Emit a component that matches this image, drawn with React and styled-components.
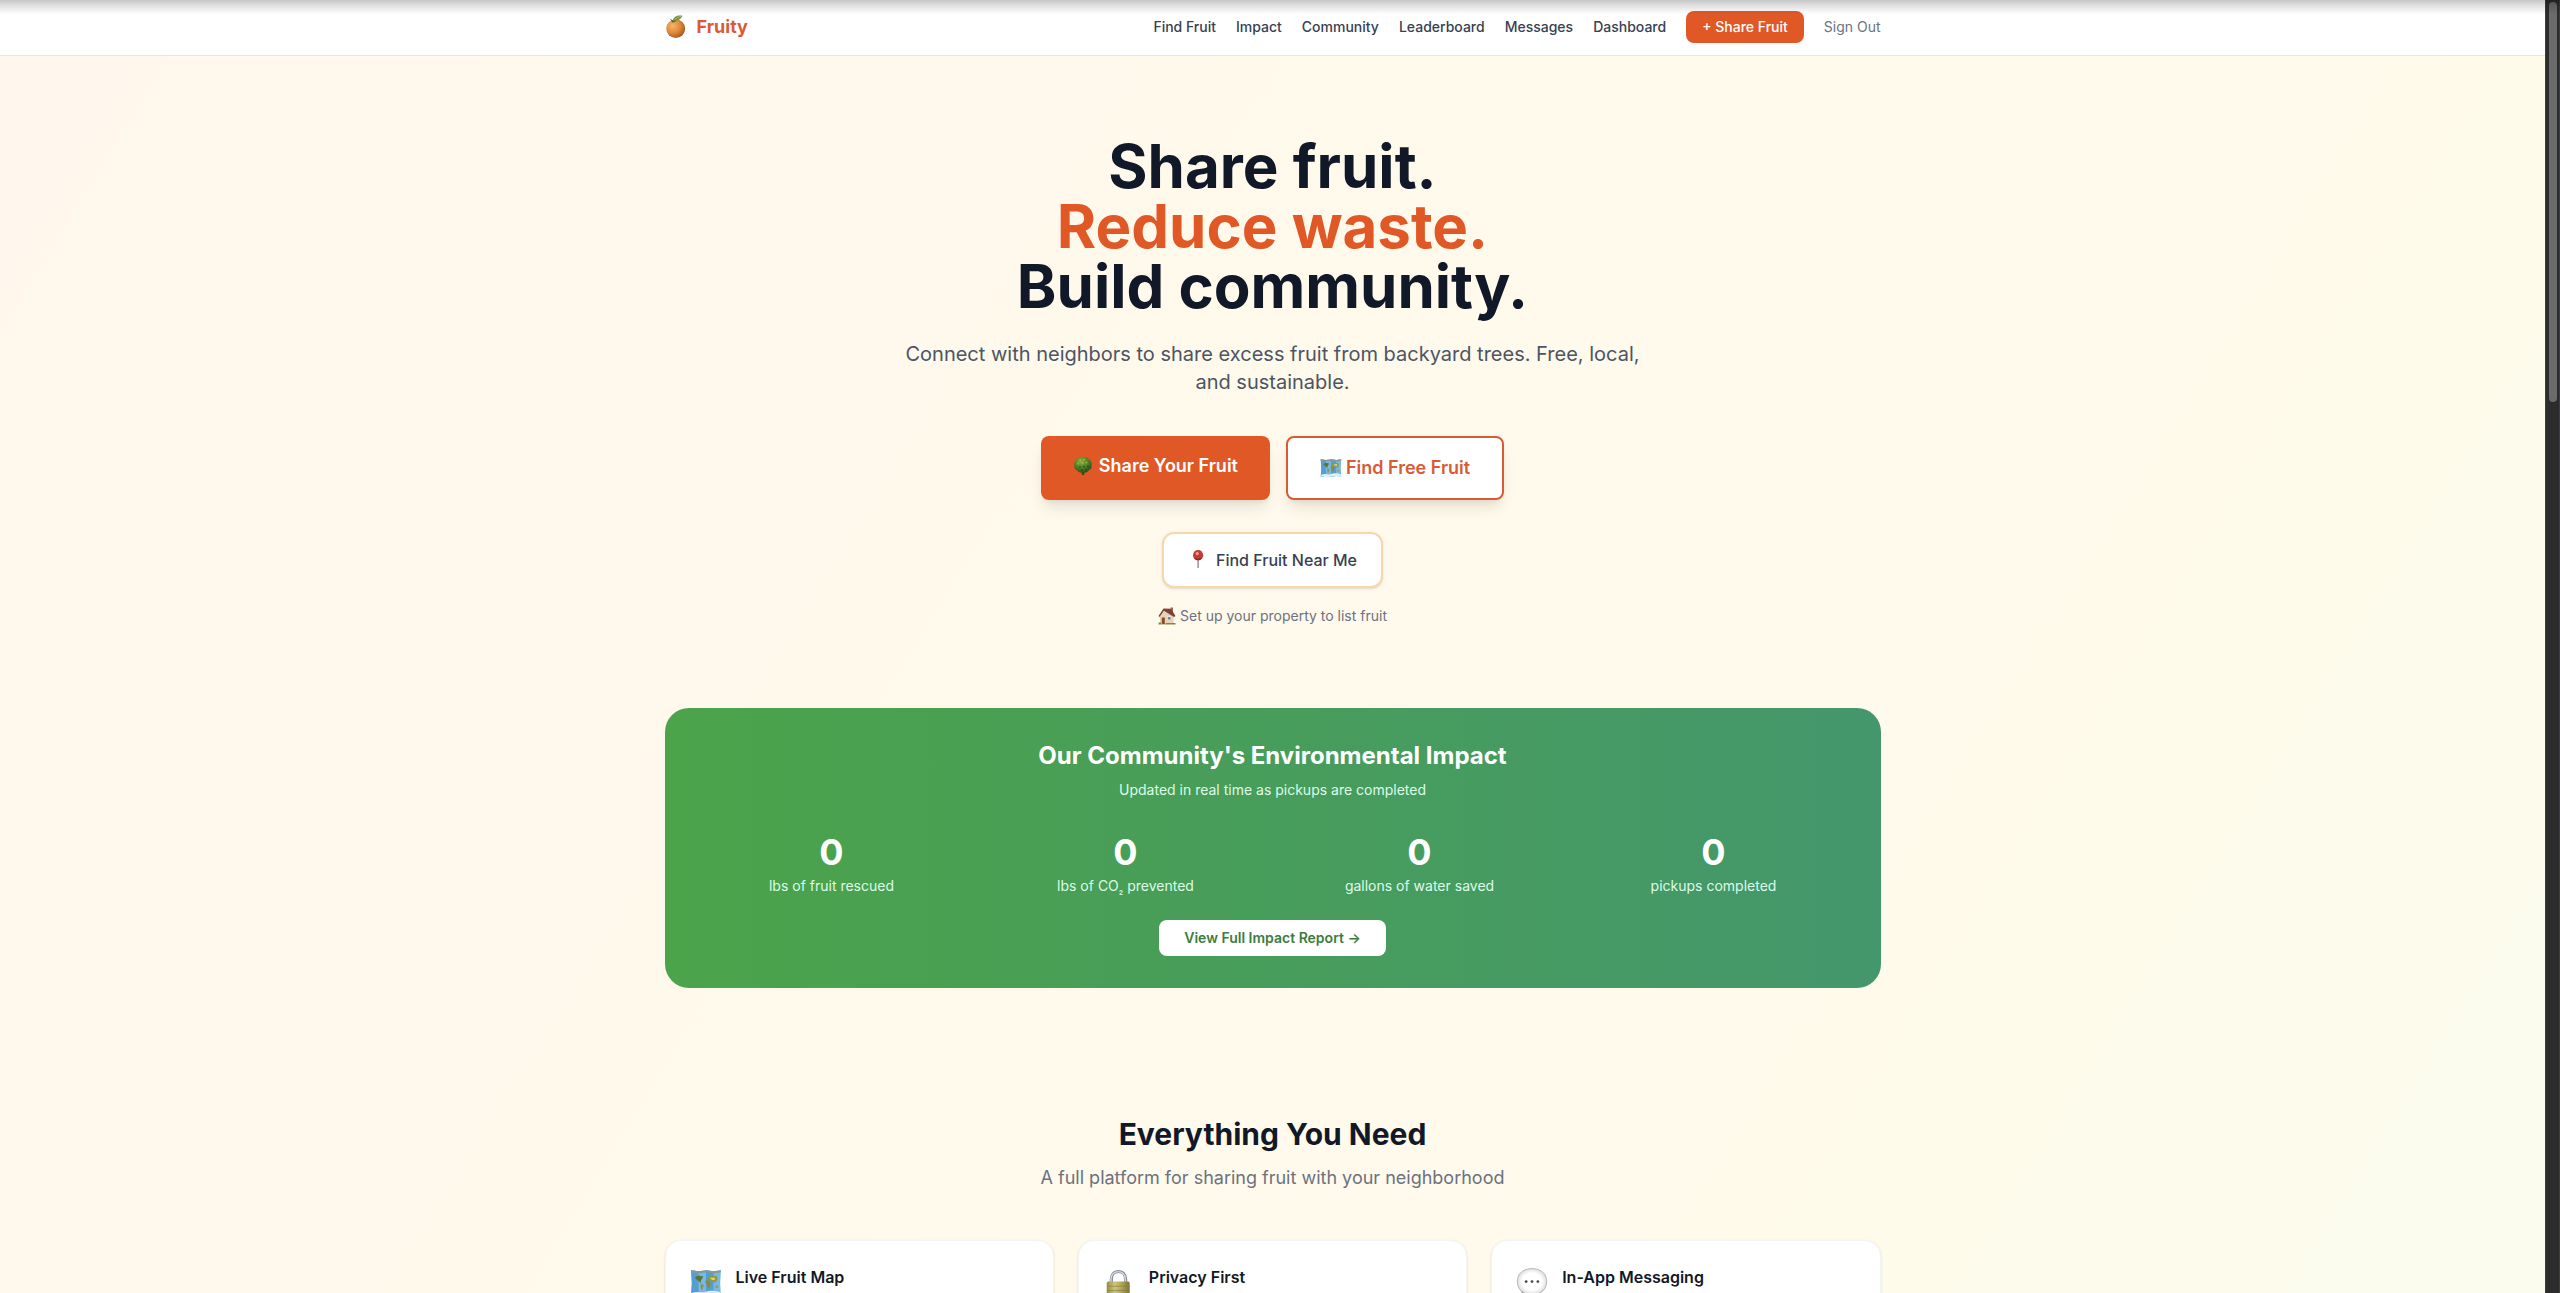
import React from 'react';
import styled, { createGlobalStyle } from 'styled-components';

const GlobalStyle = createGlobalStyle`
  * {
    box-sizing: border-box;
  }
  body {
    margin: 0;
    font-family: Inter, "Liberation Sans", sans-serif;
    font-size: 16px;
    line-height: 24px;
    color: #111827;
    background: #fffbeb;
  }
  h1, h2, h3, p {
    margin: 0;
    padding: 0;
  }
  a {
    color: inherit;
    text-decoration: none;
  }
`;

const Window = styled.div`
  display: flex;
  height: 100vh;
  overflow: hidden;
`;

const Page = styled.div`
  flex: 1;
  min-width: 0;
  height: 100%;
  overflow: hidden;
  background: linear-gradient(to bottom right, #fff7ed, #fffbeb, #f0fdf4) 0 0 / 100% 320vh no-repeat;
`;

const ScrollTrack = styled.div`
  width: 15px;
  padding: 2px 3px;
  background: #2c2c2c;
  border-left: 1px solid #3f3f37;
  border-right: 1px solid #3f3f37;
`;

const ScrollThumb = styled.div`
  width: 8px;
  height: 31%;
  border-radius: 4px;
  background: #6b6b6b;
`;

const TopShade = styled.div`
  position: fixed;
  top: 0;
  left: 0;
  right: 0;
  height: 14px;
  pointer-events: none;
  background: linear-gradient(to bottom, rgba(0, 0, 0, 0.22), rgba(0, 0, 0, 0.12) 40%, rgba(0, 0, 0, 0));
`;

const Container = styled.div`
  max-width: 1280px;
  margin: 0 auto;
  padding: 0 32px;
`;

const Header = styled.header`
  background: #fff;
  border-bottom: 1px solid #e5e7eb;
`;

const HeaderRow = styled(Container)`
  display: flex;
  align-items: center;
  justify-content: space-between;
  padding-top: 11px;
  padding-bottom: 12px;
`;

const Brand = styled.a`
  display: flex;
  align-items: center;
  gap: 8px;
  font-size: 18px;
  line-height: 28px;
  font-weight: 700;
  color: #d95b34;
`;

const Nav = styled.nav`
  display: flex;
  align-items: center;
  gap: 20px;
  font-size: 14px;
  line-height: 20px;
`;

const NavLink = styled.a`
  font-weight: 500;
  color: #374151;
`;

const ShareLink = styled.a`
  padding: 6px 16px;
  border-radius: 8px;
  font-weight: 500;
  color: #fff;
  background: #e15827;
`;

const SignOut = styled.button`
  padding: 0;
  border: 0;
  font: inherit;
  color: #6b7280;
  background: none;
`;

const Hero = styled.section`
  display: flex;
  flex-direction: column;
  align-items: center;
  padding: 80px 32px;
  text-align: center;
`;

const HeroTitle = styled.h1`
  font-size: 60px;
  line-height: 60px;
  font-weight: 700;
  color: #111827;
`;

const Accent = styled.span`
  display: block;
  color: #e15827;
`;

const Lead = styled.p`
  max-width: 768px;
  margin-top: 24px;
  font-size: 20px;
  line-height: 28px;
  color: #4b5563;
`;

const Actions = styled.div`
  display: flex;
  gap: 16px;
  margin: 40px 0 32px;
`;

const ActionLink = styled.a`
  display: flex;
  align-items: center;
  gap: ${(p) => (p.$outline ? '4px' : '6px')};
  padding: ${(p) => (p.$outline ? '16px 32px' : '16px 32px 20px')};
  border: ${(p) => (p.$outline ? '2px solid #d95b34' : '0')};
  border-radius: 8px;
  font-size: 18px;
  line-height: 28px;
  font-weight: 600;
  color: ${(p) => (p.$outline ? '#d95b34' : '#fff')};
  background: ${(p) => (p.$outline ? '#fff' : '#e15827')};
  box-shadow: 0 10px 15px -3px rgba(0, 0, 0, 0.1), 0 4px 6px -4px rgba(0, 0, 0, 0.1);
`;

const NearButton = styled.button`
  display: flex;
  align-items: center;
  gap: 8px;
  height: 56px;
  padding: 0 24px;
  border: 2px solid #f7d7ad;
  border-radius: 12px;
  font: inherit;
  font-weight: 500;
  color: #374151;
  background: #fff;
  box-shadow: 0 1px 3px rgba(0, 0, 0, 0.1), 0 1px 2px -1px rgba(0, 0, 0, 0.1);
`;

const SetupLink = styled.a`
  display: flex;
  align-items: center;
  gap: 4px;
  margin: 18px 0 2px;
  font-size: 14px;
  line-height: 20px;
  color: #6b7280;
`;

const Impact = styled.section`
  padding: 32px;
  border-radius: 24px;
  text-align: center;
  color: #fff;
  background: linear-gradient(to right, #4ba34a, #44976c);
`;

const ImpactTitle = styled.h2`
  font-size: 24px;
  line-height: 32px;
  font-weight: 700;
`;

const Small = styled.p`
  font-size: 14px;
  line-height: 20px;
  color: #dcfce7;
`;

const ImpactNote = styled(Small)`
  margin: 8px 0 32px;
`;

const Stats = styled.div`
  display: grid;
  grid-template-columns: repeat(4, 1fr);
  gap: 24px;
  margin-bottom: 24px;
`;

const StatValue = styled.p`
  margin-bottom: 4px;
  font-size: 36px;
  line-height: 40px;
  font-weight: 700;
`;

const Subscript = styled.span`
  font-size: 10px;
  line-height: 1;
  vertical-align: -2px;
`;

const ReportLink = styled.a`
  display: inline-block;
  padding: 8px 25px;
  border-radius: 8px;
  font-size: 14px;
  line-height: 20px;
  font-weight: 600;
  color: #3b7d3e;
  background: #fff;
  vertical-align: top;
`;

const Features = styled.section`
  padding: 128px 0 64px;
`;

const FeaturesTitle = styled.h2`
  font-size: 30px;
  line-height: 36px;
  font-weight: 700;
  text-align: center;
`;

const FeaturesNote = styled.p`
  margin: 12px 0 48px;
  font-size: 18px;
  line-height: 28px;
  text-align: center;
  color: #6b7280;
`;

const Cards = styled.div`
  display: grid;
  grid-template-columns: repeat(3, 1fr);
  gap: 24px;
`;

const Card = styled.article`
  display: flex;
  gap: 14px;
  min-height: 140px;
  padding: 24px;
  border: 1px solid #f3f4f6;
  border-radius: 16px;
  background: #fff;
  box-shadow: 0 1px 3px rgba(0, 0, 0, 0.1), 0 1px 2px -1px rgba(0, 0, 0, 0.1);
`;

const CardIcon = styled.div`
  display: flex;
  padding-top: 2px;
`;

const CardTitle = styled.h3`
  font-size: 16px;
  line-height: 24px;
  font-weight: 600;
`;

const Glyph = styled.svg`
  flex: none;
  width: ${(p) => p.$size}px;
  height: ${(p) => p.$size}px;
`;

const Tangerine = ({ size }) => (
  <Glyph $size={size} viewBox="0 0 24 24" aria-hidden="true">
    <defs>
      <radialGradient id="peel" cx="0.35" cy="0.35" r="0.75">
        <stop offset="0" stopColor="#f6b765" />
        <stop offset="0.5" stopColor="#e08a3c" />
        <stop offset="1" stopColor="#a34d1c" />
      </radialGradient>
    </defs>
    <ellipse cx="10.7" cy="13.6" rx="9.500" ry="9.3" fill="url(#peel)" />
    <path d="M7.500 6.500C8 2.500 11.500 -0.500 17.500 0.800C16 4.500 12.500 6.200 9 5.800Z" fill="#6f9445" />
    <path d="M5 3.800L7.800 5.200L10 4.200L11 6.500L7.500 7.800Z" fill="#4f6f33" />
    <path d="M8.500 6C10.500 3 13.500 2 16.500 1.300" stroke="#b5cc8b" strokeWidth="0.7" fill="none" />
  </Glyph>
);

const Tree = ({ size }) => (
  <Glyph $size={size} viewBox="0 0 20 20" aria-hidden="true">
    <defs>
      <radialGradient id="leaves" cx="0.4" cy="0.3" r="0.75">
        <stop offset="0" stopColor="#8cae3c" />
        <stop offset="0.55" stopColor="#4f7f27" />
        <stop offset="1" stopColor="#254c17" />
      </radialGradient>
    </defs>
    <path d="M8.500 14H11.500L11.300 18.500L10 19.500L8.700 18.500Z" fill="#5b3b20" />
    <path d="M10 0.800C13 0.500 15 2 16 3.500C18 4.500 19 7 18.600 9.500C19 12 17.500 14 15.500 14.500C14 16.800 11.500 17 10 16.200C8 17 5.500 16.500 4.500 14.500C2 14 0.800 11.500 1.200 9.500C0.800 7 2 4.500 4 3.500C5.500 1.500 7.500 0.700 10 0.800Z" fill="url(#leaves)" />
    <g fill="#b1ce5c" opacity="0.55">
      <circle cx="7" cy="4" r="1" />
      <circle cx="11" cy="3.500" r="1" />
      <circle cx="5" cy="7.500" r="1" />
      <circle cx="9.500" cy="7" r="1" />
      <circle cx="13.500" cy="6.500" r="1" />
    </g>
    <g fill="#173b12" opacity="0.5">
      <circle cx="7" cy="11" r="1.100" />
      <circle cx="11" cy="10.500" r="1.100" />
      <circle cx="15" cy="10.500" r="1.100" />
      <circle cx="9" cy="14" r="1" />
      <circle cx="13" cy="13.500" r="1" />
    </g>
  </Glyph>
);

const WorldMap = ({ size }) => (
  <Glyph $size={size} viewBox="0 0 30 30" aria-hidden="true">
    <path d="M1 3L8 4L15 3L22 4L29 3L28.300 15L29 27L22 26L15 27L8 26L1 27L1.700 15Z" fill="#77b9e6" />
    <path d="M1 3L8 4V26L1 27L1.700 15ZM15 3L22 4V26L15 27Z" fill="#549ed2" />
    <path d="M1 3L8 4L15 3L22 4L29 3V5L22 6L15 5L8 6L1 5Z" fill="#84989c" />
    <path d="M4.500 9.500L8 8L12.500 9L11 11.500L10 13L10.500 15L8.500 13.500L6 11.500Z" fill="#5c7434" />
    <path d="M10 15.500L13 17L12 20L11 22.500L10 19.500Z" fill="#98923b" />
    <path d="M14.500 13L17.500 12.500L19.500 15L18.500 19.500L16.800 20L16 16.500L14.500 15Z" fill="#8c8b3c" />
    <path d="M16 10.500L19.500 8L25 8.500L26 11L24.500 14L22 14.500L20 12.500L16.500 12.500Z" fill="#8f9a3d" />
    <path d="M18.500 10L23.500 10L23 12.500L20.500 12Z" fill="#e0d873" />
    <path d="M23.500 17.500L26 17L26.500 19.500L24 20Z" fill="#a89d41" />
    <path d="M1.200 24.500C8 22 11 24.500 14 23.500C19 21.500 25 22 28.800 24V27L22 26L15 27L8 26L1 27Z" fill="#dceffa" />
  </Glyph>
);

const Pin = ({ size }) => (
  <Glyph $size={size} viewBox="0 0 20 20" aria-hidden="true">
    <path d="M9.300 8H10.900V17.300L10.100 18.300L9.300 17.300Z" fill="#9b9b9b" />
    <circle cx="10.100" cy="5.200" r="5.100" fill="#c43a35" />
    <path d="M5.700 7.800A5.100 5.100 0 0 0 14.500 7.800C12 9.200 8.200 9.200 5.700 7.800Z" fill="#8c2727" />
    <circle cx="9.200" cy="3.600" r="1.600" fill="#f0a09a" />
  </Glyph>
);

const House = ({ size }) => (
  <Glyph $size={size} viewBox="0 0 18 18" aria-hidden="true">
    <path d="M12.500 0.500H15V6H12.500Z" fill="#9c6a57" />
    <path d="M2 9L6.500 4L14.500 7L15.500 9V17H2Z" fill="#e6d3b3" />
    <path d="M0.500 9L5.500 1.500L13 1.800L17.500 9L16 10L9.500 6L6 3.800L1.500 10Z" fill="#7c4238" />
    <path d="M3.800 10.500H6.800V17H3.800Z" fill="#8b4a32" />
    <path d="M9.200 9.500H13.200V13.200H9.200Z" fill="#f7f3e6" />
    <path d="M9.800 10.100H12.600V12.600H9.800Z" fill="#5e84a3" />
    <path d="M0.500 15.500H3.200V17.500H0.500ZM7.500 16H17.500V17.500H7.500Z" fill="#718f43" />
    <path d="M3 17H8V17.600H3Z" fill="#b9a78d" />
  </Glyph>
);

const Lock = ({ size }) => (
  <Glyph $size={size} viewBox="0 0 30 30" aria-hidden="true">
    <defs>
      <linearGradient id="brass">
        <stop offset="0" stopColor="#968d47" />
        <stop offset="0.35" stopColor="#cdc47c" />
        <stop offset="0.6" stopColor="#b5ab5c" />
        <stop offset="1" stopColor="#7d7438" />
      </linearGradient>
    </defs>
    <path d="M7.800 15V11.500C7.800 1.800 21.200 1.800 21.200 11.500V15" stroke="#858b94" strokeWidth="3" fill="none" />
    <path d="M7.500 15V11.500C7.500 2 21 2 21 11.500V15" stroke="#d4d8de" strokeWidth="1.300" fill="none" />
    <rect x="3.500" y="13.500" width="21.500" height="16.500" rx="1.500" fill="url(#brass)" />
    <path d="M4 18H25M4 22H25M4 26H25" stroke="#867d3d" strokeWidth="0.600" />
  </Glyph>
);

const Speech = ({ size }) => (
  <Glyph $size={size} viewBox="0 0 30 30" aria-hidden="true">
    <defs>
      <radialGradient id="bubble" cx="0.5" cy="0.5" r="0.55">
        <stop offset="0.6" stopColor="#ffffff" />
        <stop offset="0.88" stopColor="#e2e2e2" />
        <stop offset="1" stopColor="#a9a9a9" />
      </radialGradient>
    </defs>
    <path d="M4.500 21C6 25 5.500 27.500 4 29.500C8.500 29.500 11.500 27.500 13 25Z" fill="#9b9b9b" />
    <path d="M15 1.500C23.500 1.500 28.800 6.500 28.800 13.500C28.800 21 23.500 25.800 15 25.800C6.500 25.800 1.200 21 1.200 13.500C1.200 6.500 6.500 1.500 15 1.500Z" fill="url(#bubble)" stroke="#acacac" strokeWidth="0.700" />
    <g fill="#4c4c4c">
      <circle cx="9.500" cy="13.700" r="1.300" />
      <circle cx="15" cy="13.700" r="1.300" />
      <circle cx="20.500" cy="13.700" r="1.300" />
    </g>
  </Glyph>
);

const links = ['Find Fruit', 'Impact', 'Community', 'Leaderboard', 'Messages', 'Dashboard'];

const stats = [
  { id: 'fruit', value: 0, label: 'lbs of fruit rescued' },
  { id: 'co2', value: 0, label: <>lbs of CO<Subscript>₂</Subscript> prevented</> },
  { id: 'water', value: 0, label: 'gallons of water saved' },
  { id: 'pickups', value: 0, label: 'pickups completed' },
];

const features = [
  { title: 'Live Fruit Map', Icon: WorldMap },
  { title: 'Privacy First', Icon: Lock },
  { title: 'In-App Messaging', Icon: Speech },
];

const App = () => (
  <Window>
    <GlobalStyle />
    <Page>
      <Header>
        <HeaderRow>
          <Brand href="#">
            <Tangerine size={24} />
            Fruity
          </Brand>
          <Nav>
            {links.map((text) => (
              <NavLink key={text} href="#">{text}</NavLink>
            ))}
            <ShareLink href="#">+ Share Fruit</ShareLink>
            <SignOut type="button">Sign Out</SignOut>
          </Nav>
        </HeaderRow>
      </Header>

      <Hero>
        <HeroTitle>
          Share fruit.
          <Accent>Reduce waste.</Accent>
          Build community.
        </HeroTitle>
        <Lead>
          Connect with neighbors to share excess fruit from backyard trees. Free, local, and sustainable.
        </Lead>
        <Actions>
          <ActionLink href="#">
            <Tree size={20} />
            Share Your Fruit
          </ActionLink>
          <ActionLink href="#" $outline>
            <WorldMap size={22} />
            Find Free Fruit
          </ActionLink>
        </Actions>
        <NearButton type="button">
          <Pin size={20} />
          Find Fruit Near Me
        </NearButton>
        <SetupLink href="#">
          <House size={18} />
          Set up your property to list fruit
        </SetupLink>
      </Hero>

      <Container>
        <Impact>
          <ImpactTitle>Our Community's Environmental Impact</ImpactTitle>
          <ImpactNote>Updated in real time as pickups are completed</ImpactNote>
          <Stats>
            {stats.map((s) => (
              <div key={s.id}>
                <StatValue>{s.value}</StatValue>
                <Small>{s.label}</Small>
              </div>
            ))}
          </Stats>
          <ReportLink href="#">View Full Impact Report →</ReportLink>
        </Impact>

        <Features>
          <FeaturesTitle>Everything You Need</FeaturesTitle>
          <FeaturesNote>A full platform for sharing fruit with your neighborhood</FeaturesNote>
          <Cards>
            {features.map(({ title, Icon }) => (
              <Card key={title}>
                <CardIcon>
                  <Icon size={32} />
                </CardIcon>
                <CardTitle>{title}</CardTitle>
              </Card>
            ))}
          </Cards>
        </Features>
      </Container>
    </Page>
    <ScrollTrack>
      <ScrollThumb />
    </ScrollTrack>
    <TopShade />
  </Window>
);

export default App;
